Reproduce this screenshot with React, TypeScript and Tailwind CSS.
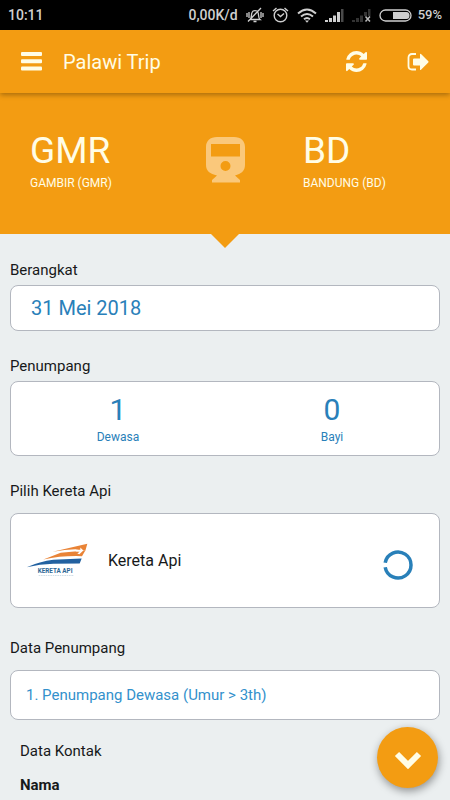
import React, { useState } from 'react';

interface StationProps {
  code: string;
  name: string;
}

const Station: React.FC<StationProps> = ({ code, name }) => (
  <div className="whitespace-nowrap text-[#fffde6]">
    <h2 className="text-[37px] leading-[44px]">{code}</h2>
    <p className="mt-0.5 text-xs">{name}</p>
  </div>
);

const MenuIcon = () => (
  <svg viewBox="0 0 21 19" className="h-[19px] w-[21px] fill-current" aria-hidden="true">
    <rect width="21" height="4" rx="1" />
    <rect y="7.200" width="21" height="4" rx="1" />
    <rect y="14.400" width="21" height="4" rx="1" />
  </svg>
);

const RefreshIcon = () => (
  <svg viewBox="0 0 1536 1536" className="h-[21px] w-[21px] fill-current" aria-hidden="true">
    <path d="M1511 928q0 5-1 7-64 268-268 434.500t-478 166.500q-146 0-282.500-55t-243.500-157l-129 129q-19 19-45 19t-45-19-19-45v-448q0-26 19-45t45-19h448q26 0 45 19t19 45-19 45l-137 137q71 66 161 102t187 36q134 0 250-65t186-179q11-17 53-117 8-23 30-23h192q13 0 22.500 9.500t9.500 22.500zm25-800v448q0 26-19 45t-45 19h-448q-26 0-45-19t-19-45 19-45l138-138q-148-137-349-137-134 0-250 65t-186 179q-11 17-53 117-8 23-30 23h-199q-13 0-22.500-9.500t-9.500-22.500v-7q65-268 270-434.500t480-166.500q146 0 284 55.500t245 156.500l130-129q19-19 45-19t45 19 19 45z" />
  </svg>
);

const SignOutIcon = () => (
  <svg viewBox="0 0 22 20" className="h-5 w-[22px]" aria-hidden="true">
    <path d="M9 2H5C3 2 1.500 3.500 1.500 5.500v8.500c0 2 1.500 3.500 3.500 3.500h4" fill="none" stroke="currentColor" strokeWidth="1.800" />
    <path d="M13 2.500v4H7q-1 0-1 1v5q0 1 1 1h6v4q0 1 1 .3l7.300-7.300q.6-.6 0-1.200L14 2q-1-.6-1 .5z" fill="currentColor" />
  </svg>
);

const TrainIcon = () => (
  <svg viewBox="0 0 39 46" className="h-[46px] w-[39px] fill-[#fac87b]" aria-hidden="true">
    <path
      fillRule="evenodd"
      d="M11 0h17c7 0 11 4 11 10v18c0 6-4 9-10 10.500l5 4.500v2.500H6V43l5-4.500C4 37 0 34 0 28V10C0 4 4 0 11 0zM5 7v12.500h29V7zM19.500 24a5 5 0 1 0 0 10 5 5 0 0 0 0-10z"
    />
  </svg>
);

const KeretaLogo = () => (
  <svg viewBox="78 208 186 104" className="h-[35px] w-[62px] shrink-0" role="img" aria-label="Kereta Api">
    <path d="M262 210L158 234Q196 227 226 226L256 231z" fill="#e98336" />
    <path d="M256 230L182 237L130 257Q185 245 246 247z" fill="#e98336" />
    <path d="M232 239l7-5-13-1q10-6 15-5v-7l9 9-12 11z" fill="#fff" />
    <path d="M245 254L160 258Q120 263 80 280Q120 271 160 270L239 269z" fill="#2261a0" />
    <text x="113" y="299" fontSize="19" fontWeight="700" fill="#2d6796" fontFamily="Roboto, sans-serif">
      KERETA API
    </text>
    <path d="M116 305h106" stroke="#b9cfdc" strokeWidth="2" strokeDasharray="5 2" />
  </svg>
);

const StatusBar = () => (
  <div className="flex h-[30px] items-center justify-between bg-black px-2 text-sm font-medium text-[#cfcfcf]">
    <span>10:11</span>
    <div className="flex items-center gap-2">
      <span>0,00K/d</span>
      <svg viewBox="0 0 18 16" className="h-4 w-[18px]" fill="none" stroke="currentColor" strokeWidth="1.300" aria-hidden="true">
        <path d="M4 12.500c2-1.500 1-5 2-7 1-2.500 5-2.500 6 0 1 2 0 5.500 2 7zM7.500 14.500h3M2 14.500L15 1M1 6v4M3 5v6M15 5v6M17 6v4" />
      </svg>
      <svg viewBox="0 0 17 16" className="h-4 w-[17px]" fill="none" stroke="currentColor" strokeWidth="1.400" aria-hidden="true">
        <circle cx="8.500" cy="8.500" r="6.300" />
        <path d="M5.500 7l3 2.500L12 6.500M1 4l3.500-3M16 4l-3.500-3" />
      </svg>
      <svg viewBox="0 0 20 15" className="h-[15px] w-5" fill="none" stroke="currentColor" strokeWidth="2" aria-hidden="true">
        <path d="M1 5.500q9-8 18 0M4 8.500q6-5 12 0M7 11.300q3-2.500 6 0" />
        <path d="M8 12.500h4l-2 2.200z" fill="currentColor" stroke="none" />
      </svg>
      <svg viewBox="0 0 19 14" className="h-[14px] w-[19px]" fill="currentColor" aria-hidden="true">
        <path d="M0 12h3v2H0zM4 10h3v4H4zM8 7.500h3V14H8zM12 4h3v10h-3z" />
        <path d="M16 1h2.500v13H16z" fill="#4a4a4a" />
      </svg>
      <svg viewBox="0 0 19 14" className="h-[14px] w-[19px]" fill="#333" aria-hidden="true">
        <path d="M0 12h3v2H0zM4 10h3v4H4zM8 7.500h3V14H8zM12 4h3v4h-3zM16 1h2.500v7H16z" />
        <path d="M13.500 8.500l4.500 5M18 8.500l-4.500 5" stroke="#b8b8b8" strokeWidth="1.500" />
      </svg>
      <div className="flex items-center gap-1.5">
        <svg viewBox="0 0 33 13" className="h-[13px] w-[33px]" aria-hidden="true">
          <rect x="1" y="1" width="31" height="11" rx="5.500" fill="none" stroke="currentColor" strokeWidth="1.300" />
          <path d="M14 3h13.500q3 0 3 3.500t-3 3.500H14z" fill="currentColor" />
        </svg>
        <span className="text-[13px]">59%</span>
      </div>
    </div>
  </div>
);

const box = 'rounded-lg border border-[#b3b7bf] bg-white';

export default function App() {
  const [date, setDate] = useState('31 Mei 2018');
  const [adults, setAdults] = useState(1);
  const [infants, setInfants] = useState(0);

  return (
    <div className="min-h-screen bg-[#ebeff0] font-['Roboto',sans-serif] text-[15px] leading-6 text-[#17191a]">
      <StatusBar />

      <header className="relative flex h-[63px] items-center bg-[#f39c12] px-[21px] text-[#fffde6] shadow-[0_2px_5px_rgba(0,0,0,0.3)]">
        <button aria-label="Menu">
          <MenuIcon />
        </button>
        <h1 className="ml-[21px] flex-1 text-xl">Palawi Trip</h1>
        <button aria-label="Refresh" className="mr-10">
          <RefreshIcon />
        </button>
        <button aria-label="Keluar">
          <SignOutIcon />
        </button>
      </header>

      <section className="grid h-[141px] grid-cols-[3fr_4fr_3fr] items-center bg-[#f39c12] px-[30px] pb-2">
        <Station code="GMR" name="GAMBIR (GMR)" />
        <div className="flex justify-center">
          <TrainIcon />
        </div>
        <Station code="BD" name="BANDUNG (BD)" />
      </section>
      <svg viewBox="0 0 28 14" className="mx-auto block h-[14px] w-7 fill-[#f39c12]" aria-hidden="true">
        <path d="M0 0h28L14 14z" />
      </svg>

      <main className="px-[10px] pt-[10px]">
        <label htmlFor="date" className="block">Berangkat</label>
        <input
          id="date"
          value={date}
          onChange={(e) => setDate(e.target.value)}
          className={`mt-[3px] block h-[46px] w-full px-5 text-xl text-[#2980b9] ${box}`}
        />

        <h3 className="mt-[23px]">Penumpang</h3>
        <div className={`mt-[3px] grid h-[75px] grid-cols-2 text-[#2980b9] ${box}`}>
          <button className="flex flex-col items-center pt-3" onClick={() => setAdults(adults + 1)}>
            <span className="text-[30px] leading-8">{adults}</span>
            <span className="text-xs leading-[22px]">Dewasa</span>
          </button>
          <button className="flex flex-col items-center pt-3" onClick={() => setInfants(infants + 1)}>
            <span className="text-[30px] leading-8">{infants}</span>
            <span className="text-xs leading-[22px]">Bayi</span>
          </button>
        </div>

        <h3 className="mt-[23px]">Pilih Kereta Api</h3>
        <div className={`mt-[10px] flex h-[95px] items-center pr-[26px] pl-[15px] ${box}`}>
          <KeretaLogo />
          <span className="ml-5 flex-1 text-base">Kereta Api</span>
          <svg viewBox="0 0 30 30" className="mt-2 h-[30px] w-[30px]" role="img" aria-label="Memuat">
            <path d="M2.200 12.800A13 13 0 1 1 2.200 17.200" fill="none" stroke="#2980b9" strokeWidth="3.500" />
          </svg>
        </div>

        <h3 className="mt-7">Data Penumpang</h3>
        <button className={`mt-[10px] block h-[50px] w-full px-[15px] text-left text-[#3391cc] ${box}`}>
          1. Penumpang Dewasa (Umur &gt; 3th)
        </button>

        <div className="px-[10px] pt-[19px]">
          <h3>Data Kontak</h3>
          <h4 className="mt-[10px] font-bold">Nama</h4>
        </div>
      </main>

      <button
        aria-label="Lanjut"
        className="fixed right-3 bottom-3 flex h-[61px] w-[61px] items-center justify-center rounded-full bg-[#f39c12] text-[#fffde6] shadow-[1px_3px_8px_rgba(0,0,0,0.4)]"
      >
        <svg viewBox="0 0 28 18" className="mt-1 h-[18px] w-7" fill="none" stroke="currentColor" strokeWidth="6" strokeLinejoin="miter" aria-hidden="true">
          <path d="M3 3L14 14L25 3" />
        </svg>
      </button>
    </div>
  );
}
